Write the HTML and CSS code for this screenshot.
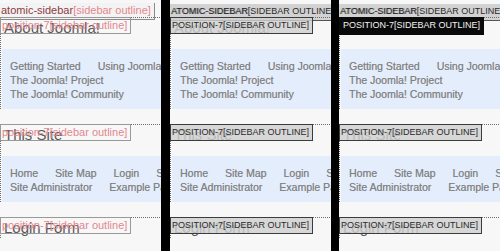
FILE: index.html
```html
<!DOCTYPE html>
<html lang="en">
<head>
    <meta charset="UTF-8">
    <title>Module positions preview</title>
    <link rel="stylesheet" href="styles.css">
</head>
<body>
    <div class="screens">
        <!-- plain outline -->
        <div class="panel plain">
            <div class="atomic">
                <span class="info"><span class="pos">atomic-sidebar</span>[sidebar outline]</span>
            </div>
            <div class="module">
                <span class="info">position-7[sidebar outline]</span>
                <h3>About Joomla!</h3>
                <ul class="menu">
                    <li>Getting Started</li>
                    <li>Using Joomla!</li>
                    <li>The Joomla! Project</li>
                    <li>The Joomla! Community</li>
                </ul>
            </div>
            <div class="module">
                <span class="info">position-7[sidebar outline]</span>
                <h3>This Site</h3>
                <ul class="menu">
                    <li>Home</li>
                    <li>Site Map</li>
                    <li>Login</li>
                    <li>Search</li>
                    <li>Site Administrator</li>
                    <li>Example Pages</li>
                </ul>
            </div>
            <div class="module">
                <span class="info">position-7[sidebar outline]</span>
                <h3>Login Form</h3>
            </div>
        </div>

        <!-- caps outline -->
        <div class="panel caps">
            <div class="atomic">
                <span class="info"><span class="pos">atomic-sidebar</span>[sidebar outline]</span>
            </div>
            <div class="module">
                <span class="info">position-7[sidebar outline]</span>
                <h3>About Joomla!</h3>
                <ul class="menu">
                    <li>Getting Started</li>
                    <li>Using Joomla!</li>
                    <li>The Joomla! Project</li>
                    <li>The Joomla! Community</li>
                </ul>
            </div>
            <div class="module">
                <span class="info">position-7[sidebar outline]</span>
                <h3>This Site</h3>
                <ul class="menu">
                    <li>Home</li>
                    <li>Site Map</li>
                    <li>Login</li>
                    <li>Search</li>
                    <li>Site Administrator</li>
                    <li>Example Pages</li>
                </ul>
            </div>
            <div class="module">
                <span class="info">position-7[sidebar outline]</span>
                <h3>Login Form</h3>
            </div>
        </div>

        <!-- caps outline, first module hovered -->
        <div class="panel caps">
            <div class="atomic">
                <span class="info"><span class="pos">atomic-sidebar</span>[sidebar outline]</span>
            </div>
            <div class="module hover">
                <span class="info">position-7[sidebar outline]</span>
                <h3>About Joomla!</h3>
                <ul class="menu">
                    <li>Getting Started</li>
                    <li>Using Joomla!</li>
                    <li>The Joomla! Project</li>
                    <li>The Joomla! Community</li>
                </ul>
            </div>
            <div class="module">
                <span class="info">position-7[sidebar outline]</span>
                <h3>This Site</h3>
                <ul class="menu">
                    <li>Home</li>
                    <li>Site Map</li>
                    <li>Login</li>
                    <li>Search</li>
                    <li>Site Administrator</li>
                    <li>Example Pages</li>
                </ul>
            </div>
            <div class="module">
                <span class="info">position-7[sidebar outline]</span>
                <h3>Login Form</h3>
            </div>
        </div>
    </div>
</body>
</html>
```

FILE: styles.css
```css
/* Reset */
* {
    margin: 0;
    padding: 0;
    box-sizing: border-box;
}

html, body {
    height: 100%;
}

body {
    font-family: 'Liberation Sans', Arial, sans-serif;
    background-color: #000;
    color: #555;
    overflow: hidden;
}

.screens {
    display: flex;
    height: 251px;
}

.panel {
    width: 161px;
    flex: none;
    overflow: hidden;
    background-color: #f7f7f7;
}

.panel + .panel {
    margin-left: 9px;
}

.panel + .panel + .panel {
    margin-left: 8px;
}

/* Position labels */
.info {
    display: inline-block;
    white-space: nowrap;
    border: 1px solid #999;
    padding: 0 3px 0 1px;
    height: 17px;
    font-size: 11px;
    line-height: 15px;
    color: #e3878f;
}

.atomic {
    height: 17px;
}

.atomic .info {
    background-color: #f3f3f3;
    border-color: #8a8a8a;
    border-top: none;
    border-left: none;
}

.atomic .pos {
    color: #8e3b45;
}

.module .info {
    position: absolute;
    top: -1px;
    left: -1px;
    z-index: 2;
}

/* Upper case variant */
.caps .info {
    font-size: 9px;
    text-transform: uppercase;
    color: #2a2a2a;
    border-color: #3c3c3c;
    background-color: rgba(208, 208, 208, 0.82);
}

.caps .atomic .info {
    background-color: #d2d2d2;
    border-color: #555;
    padding-right: 0;
}

.caps .atomic .pos {
    color: #1e1e1e;
    text-shadow: 1px 0 0 rgba(0, 0, 0, 0.35);
}

.caps .hover .info {
    background-color: #0a0a0a;
    border-color: #0a0a0a;
    color: #f2f2f2;
    height: 18px;
    padding-left: 3px;
}

/* Modules */
.module {
    position: relative;
    width: 230px;
    border-top: 1px dotted #6c6c6c;
    border-left: 1px dotted #6c6c6c;
    padding-left: 1px;
    margin-bottom: 15px;
}

.module h3 {
    font-size: 15px;
    font-weight: normal;
    line-height: 20px;
    color: #5a5a5a;
    padding-left: 2px;
    margin-bottom: 11px;
}

.menu {
    list-style: none;
    display: flex;
    flex-wrap: wrap;
    column-gap: 17px;
    padding: 10px 0 8px 8px;
    background-color: #e4edfb;
    font-size: 10.5px;
    line-height: 14px;
    color: #808080;
    text-shadow: 0.3px 0 0 rgba(128, 128, 128, 0.6);
}
```
